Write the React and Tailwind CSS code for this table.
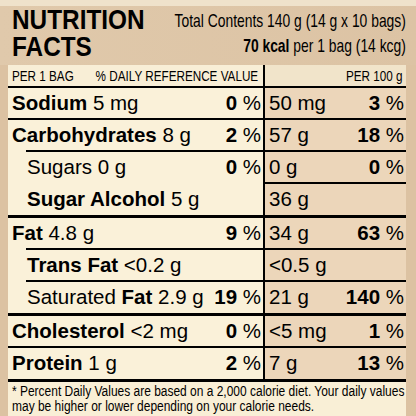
import React from 'react';

const sans = { fontFamily: '"Liberation Sans", Arial, sans-serif' };

const rows = [
  { name: 'Sodium', amt: '5 mg', dv: '0', per: '50 mg', pct: '3', lineL: 'full', h: 30, lh: 2 },
  { name: 'Carbohydrates', amt: '8 g', dv: '2', per: '57 g', pct: '18', lineL: 'indent', h: 30, lh: 2 },
  { pre: 'Sugars 0 g', indent: true, dv: '0', per: '0 g', pct: '0', lineL: 'none', h: 30, lh: 2 },
  { name: 'Sugar Alcohol', amt: '5 g', indent: true, per: '36 g', lineL: 'full', h: 31, lh: 3 },
  { name: 'Fat', amt: '4.8 g', dv: '9', per: '34 g', pct: '63', lineL: 'indent', h: 30, lh: 2 },
  { name: 'Trans Fat', amt: '<0.2 g', indent: true, per: '<0.5 g', lineL: 'indent', h: 30, lh: 2 },
  { pre: 'Saturated ', name: 'Fat', amt: '2.9 g', indent: true, dv: '19', per: '21 g', pct: '140', lineL: 'full', h: 31, lh: 3 },
  { name: 'Cholesterol', amt: '<2 mg', dv: '0', per: '<5 mg', pct: '1', lineL: 'full', h: 30, lh: 2 },
  { name: 'Protein', amt: '1 g', dv: '2', per: '7 g', pct: '13', lineL: 'full', h: 31, lh: 3 },
];

function Row({ r }) {
  const lineCls =
    r.lineL === 'full' ? 'bg-black' : r.lineL === 'indent' ? 'bg-black ml-[18px]' : 'bg-transparent';
  return (
    <div className="flex">
      <div className="w-[257px] border-r-2 border-black bg-[#faf1d9] flex flex-col">
        <div
          className={`flex items-center justify-between pr-[2px] text-[20.5px] leading-none ${r.indent ? 'pl-[19px]' : 'pl-[4px]'}`}
          style={{ height: r.h }}
        >
          <span className="whitespace-nowrap">
            {r.pre}
            {r.name && <b>{r.name}</b>} {r.amt}
          </span>
          {r.dv && (
            <span className="whitespace-nowrap">
              <b>{r.dv}</b> %
            </span>
          )}
        </div>
        <div className={lineCls} style={{ height: r.lh }} />
      </div>
      <div className="flex-1 bg-[#ecd6ba] flex flex-col">
        <div
          className="flex items-center justify-between pl-[4px] pr-[2px] text-[20.5px] leading-none"
          style={{ height: r.h }}
        >
          <span className="whitespace-nowrap">{r.per}</span>
          {r.pct && (
            <span className="whitespace-nowrap">
              <b>{r.pct}</b> %
            </span>
          )}
        </div>
        <div className="bg-black" style={{ height: r.lh }} />
      </div>
    </div>
  );
}

export default function App() {
  return (
    <div className="w-[416px] h-[416px] overflow-hidden bg-[#dcc2a2] text-black" style={sans}>
      <div className="h-[6px] bg-[#efe2cb]" />
      {/* Title block */}
      <div className="h-[59px] flex pl-[12px] pr-[10px] bg-gradient-to-r from-[#e0c9ab] to-[#dcc3a4]">
        <div className="w-[150px] shrink-0">
          <h1 className="font-bold text-[28px] leading-[27px] whitespace-nowrap origin-left scale-x-[0.87]">
            NUTRITION
            <br />
            FACTS
          </h1>
        </div>
        <div className="flex-1 min-w-0 flex justify-end">
          <div className="shrink-0 text-right text-[19px] leading-[25px] pt-[2px] whitespace-nowrap origin-right scale-x-[0.73]">
            <div>Total Contents 140 g (14 g x 10 bags)</div>
            <div>
              <b>70 kcal</b> per 1 bag (14 kcg)
            </div>
          </div>
        </div>
      </div>

      <div className="pl-[8px] pr-[10px]">
        {/* Column header */}
        <div className="flex text-[15px] leading-none">
          <div className="w-[257px] border-r-2 border-black bg-[#f8eed6] flex flex-col">
            <div className="h-[21px] flex items-center pl-[4px]">
              <div className="whitespace-nowrap origin-left scale-x-[0.78]">
                <span>PER 1 BAG</span>
                <span className="ml-[28px]">% DAILY REFERENCE VALUE</span>
              </div>
            </div>
            <div className="h-[2px] bg-black" />
          </div>
          <div className="flex-1 bg-[#f1e4ca] flex flex-col">
            <div className="h-[21px] flex items-center justify-end pr-[3px]">
              <span className="whitespace-nowrap inline-block origin-right scale-x-[0.78]">PER 100 g</span>
            </div>
            <div className="h-[2px] bg-black" />
          </div>
        </div>

        {rows.map((r, i) => (
          <Row key={i} r={r} />
        ))}

        {/* Footnote */}
        <div className="h-[34px] bg-[#f9efd6] pl-[4px] pt-[2px] text-[14px] leading-[15px]">
          <div className="whitespace-nowrap origin-left scale-x-[0.855]">
            * Percent Daily Values are based on a 2,000 calorie diet. Your daily values
            <br />
            may be higher or lower depending on your calorie needs.
          </div>
        </div>
      </div>
    </div>
  );
}
